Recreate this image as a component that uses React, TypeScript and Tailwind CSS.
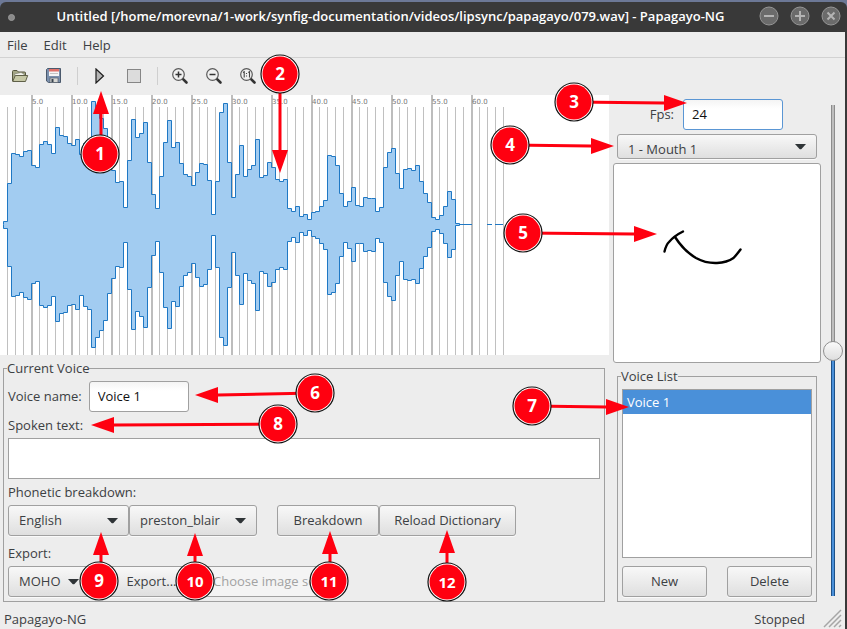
import React from 'react';

const TOPS = [
  126, 88, 58, 59, 61, 56, 55, 70, 72, 49, 46, 49, 58, 32, 40, 41, 48, 50, 44, 59, 48, 45, 6, 17, 23, 33, 61, 75, 87,
  86, 112, 65, 24, 42, 38, 27, 67, 99, 113, 81, 47, 25, 52, 47, 68, 79, 81, 90, 77, 68, 69, 85, 119, 86, 17, 8, 67,
  102, 79, 50, 81, 74, 70, 44, 82, 80, 67, 72, 84, 86, 84, 113, 116, 111, 121, 119, 124, 117, 116, 111, 105, 60, 61,
  70, 98, 111, 106, 92, 110, 111, 102, 103, 103, 116, 112, 72, 57, 53, 78, 93, 74, 73, 75, 70, 86, 98, 107, 122, 124,
  120, 111, 96, 104, 128,
];

const BOTTOMS = [
  133, 171, 201, 200, 197, 202, 204, 188, 186, 210, 212, 210, 201, 226, 218, 217, 210, 209, 214, 200, 211, 214, 252,
  242, 235, 225, 198, 183, 171, 172, 147, 194, 234, 216, 221, 232, 192, 160, 146, 177, 212, 233, 206, 211, 191, 180,
  177, 168, 182, 191, 189, 174, 140, 172, 242, 250, 192, 157, 180, 209, 178, 185, 188, 215, 176, 178, 191, 187, 174,
  172, 174, 146, 142, 147, 137, 140, 135, 141, 143, 148, 154, 199, 197, 188, 161, 147, 153, 166, 148, 148, 156, 155,
  156, 143, 147, 187, 201, 205, 180, 166, 184, 185, 184, 188, 173, 161, 152, 136, 134, 138, 148, 162, 154, 130,
];

function wavePath() {
  let d = 'M3.5 129.5';
  TOPS.forEach((t, i) => {
    d += `V${t + 0.5}H${3.5 + 4 * (i + 1)}`;
  });
  for (let i = BOTTOMS.length - 1; i >= 0; i--) {
    d += `V${BOTTOMS[i] + 0.5}H${3.5 + 4 * i}`;
  }
  return d + 'Z';
}

function Waveform() {
  const lines = Array.from({ length: 63 }, (_, k) => k);
  return (
    <div className="h-[260px] overflow-hidden bg-white">
      <svg width="609" height="260" role="img" aria-label="Audio waveform">
        {lines.map((k) => {
          const major = k % 5 === 3;
          return (
            <rect
              key={k}
              x={7 + 8 * k}
              y={major ? 0 : 12}
              width={major ? 2 : 1}
              height={major ? 260 : 248}
              fill={major ? '#bdbdbd' : '#c0c0c0'}
            />
          );
        })}
        {Array.from({ length: 12 }, (_, i) => (
          <text key={i} x={32 + 40 * i} y={9} fill="#777" className="font-['DejaVu_Sans',sans-serif] text-[7px]">
            {(5 * (i + 1)).toFixed(1)}
          </text>
        ))}
        <path d={wavePath()} fill="#a2ccf1" stroke="#1f78c4" strokeWidth="1" />
        <path d="M459 129.5h13M487 129.5h5M495 129.5h8" stroke="#1f78c4" strokeWidth="1" />
      </svg>
    </div>
  );
}

const face =
  'rounded-[3px] border border-[#a0a0a0] bg-linear-to-b from-[#f8f8f8] to-[#dfdfdf] shadow-[0_1px_0_#fafafa] text-[#3c4043]';

function Button({ children, className }: { children: React.ReactNode; className: string }) {
  return (
    <button type="button" className={`${face} h-[31px] shrink-0 pb-[2px] ${className}`}>
      {children}
    </button>
  );
}

function Select({ value, label, className, pad }: { value: string; label: string; className: string; pad?: string }) {
  return (
    <div className={`relative shrink-0 ${className}`}>
      <select
        aria-label={label}
        defaultValue={value}
        className={`${face} block h-full w-full appearance-none pl-[10px] pr-6 ${pad ?? 'pb-[2px]'}`}
      >
        <option>{value}</option>
      </select>
      <svg className="pointer-events-none absolute top-1/2 right-[11px] -mt-[3px]" width="11" height="6">
        <path d="M0 0H11L6.500 5Q5.500 5.700 4.500 5Z" fill="#2f3437" />
      </svg>
    </div>
  );
}

function Magnifier({ kind }: { kind: 'in' | 'out' | 'one' }) {
  return (
    <svg width="18" height="18" viewBox="0 0 18 18">
      <path d="M11.800 11.800L15.500 15.500" stroke="#333" strokeWidth="2.600" strokeLinecap="round" />
      <circle cx="7.500" cy="7.500" r="5.800" fill="#f0f0f0" stroke="#5a5a5a" strokeWidth="1.200" />
      {kind !== 'one' && <path d="M4.500 7.500h6" stroke="#333" strokeWidth="1.500" />}
      {kind === 'in' && <path d="M7.500 4.500v6" stroke="#333" strokeWidth="1.500" />}
      {kind === 'one' && (
        <path d="M4 5.500l1.200-.8v5.800M9.300 5.500l1.200-.8v5.800M7.500 6v1M7.500 8.500v1" stroke="#444" strokeWidth="1.100" fill="none" />
      )}
    </svg>
  );
}

function FolderIcon() {
  return (
    <svg width="18" height="16" viewBox="0 0 18 16">
      <path d="M1.500 13V3.500Q1.500 2.500 2.500 2.500H6L7.500 4H13.500Q14.500 4 14.500 5V8" fill="#a3a585" stroke="#56573f" />
      <path d="M3.500 6L10 4.500L13 6V8H4Z" fill="#f4f4ee" stroke="#77786a" strokeWidth=".6" />
      <path d="M4.300 7.500H16.700L14.500 13.500H1.700Z" fill="#c6c8a6" stroke="#5f6048" strokeLinejoin="round" />
    </svg>
  );
}

function FloppyIcon() {
  return (
    <svg width="16" height="16" viewBox="0 0 16 16">
      <path d="M1.500 .5H14.500V14.500H2.500L.5 13V1.500Z" fill="#7b90ad" stroke="#4b596c" />
      <rect x="3" y="1" width="10" height="7" fill="#f5f5f5" />
      <rect x="3" y="1" width="10" height="2.500" fill="#e0716a" />
      <path d="M4 5.500h8" stroke="#c5c5c5" />
      <rect x="4" y="10" width="8" height="4.500" fill="#d8d8d4" stroke="#56606c" strokeWidth=".7" />
      <rect x="5.500" y="11" width="2" height="3" fill="#39434f" />
    </svg>
  );
}

function ToolButton({ label, children }: { label: string; children: React.ReactNode }) {
  return (
    <button type="button" aria-label={label} className="flex h-8 w-[34px] items-center justify-center">
      {children}
    </button>
  );
}

function Separator() {
  return (
    <div className="flex w-3 justify-center">
      <div className="h-[18px] w-px bg-[#cfcfcf]" />
    </div>
  );
}

function WindowButton({ label, d }: { label: string; d: string }) {
  return (
    <button type="button" aria-label={label} className="block">
      <svg width="20" height="20" viewBox="0 0 20 20">
        <circle cx="10" cy="10" r="9" fill="#6b6b6b" stroke="#969696" />
        <path d={d} stroke="#b4b4b4" strokeWidth="2" fill="none" />
      </svg>
    </button>
  );
}

type Mark = { n: number; x: number; y: number; tip: [number, number] };

const MARKS: Mark[] = [
  { n: 1, x: 100, y: 154, tip: [101, 91] },
  { n: 2, x: 280, y: 74, tip: [280, 173] },
  { n: 3, x: 574, y: 102, tip: [687, 103] },
  { n: 4, x: 510, y: 145, tip: [614, 146] },
  { n: 5, x: 523, y: 233, tip: [657, 234] },
  { n: 6, x: 315, y: 393, tip: [195, 395] },
  { n: 7, x: 532, y: 406, tip: [629, 407] },
  { n: 8, x: 278, y: 424, tip: [91, 425] },
  { n: 9, x: 99, y: 581, tip: [101, 532] },
  { n: 10, x: 195, y: 581, tip: [195, 533] },
  { n: 11, x: 329, y: 581, tip: [330, 531] },
  { n: 12, x: 447, y: 582, tip: [447, 530] },
];

function Annotations() {
  return (
    <svg className="pointer-events-none absolute top-0 left-0" width="847" height="629">
      {MARKS.map(({ n, x, y, tip }) => {
        const horizontal = Math.abs(tip[0] - x) > Math.abs(tip[1] - y);
        const sign = horizontal ? Math.sign(tip[0] - x) : Math.sign(tip[1] - y);
        const base = horizontal ? [tip[0] - 23 * sign, tip[1]] : [tip[0], tip[1] - 23 * sign];
        const head = horizontal
          ? `M${tip[0]} ${tip[1]}L${base[0]} ${base[1] - 8}V${base[1] + 8}Z`
          : `M${tip[0]} ${tip[1]}L${base[0] - 8} ${base[1]}H${base[0] + 8}Z`;
        const startX = horizontal ? x : tip[0];
        return (
          <g key={n}>
            <line x1={startX} y1={y} x2={base[0]} y2={base[1]} stroke="#ff0010" strokeWidth="3" />
            <path d={head} fill="#ff0010" />
            <circle cx={x} cy={y} r="19" fill="#fff" stroke="#111" strokeWidth="1.200" />
            <circle cx={x} cy={y} r="17.500" fill="#ff0010" />
            <text
              x={x}
              y={y + 6}
              textAnchor="middle"
              fill="#fff"
              className={n > 9 ? 'text-[15px] font-bold' : 'text-[17px] font-bold'}
            >
              {n}
            </text>
          </g>
        );
      })}
    </svg>
  );
}

export default function App() {
  return (
    <div className="relative flex min-h-screen flex-col bg-[#6c7896] pt-[2px] font-['Open_Sans','Noto_Sans',sans-serif] text-[13px] leading-[18px] text-[#3c4043]">
      <header className="flex h-[30px] items-center rounded-t-md bg-[#393939] pr-[6px] pl-[7px]">
        <svg width="9" height="9" aria-hidden="true">
          <circle cx="4.500" cy="4.500" r="3" fill="#8a8a8a" stroke="#999" />
        </svg>
        <h1 className="flex-1 pb-[2px] pl-[6px] text-center text-[13px] font-semibold whitespace-nowrap text-white">
          Untitled [/home/morevna/1-work/synfig-documentation/videos/lipsync/papagayo/079.wav] - Papagayo-NG
        </h1>
        <div className="flex gap-[11px] pb-[2px]">
          <WindowButton label="Minimize" d="M5 10h10" />
          <WindowButton label="Maximize" d="M5 10h10M10 5v10" />
          <WindowButton label="Close" d="M6.500 6.500l7 7M13.500 6.500l-7 7" />
        </div>
      </header>

      <div className="flex flex-1 flex-col border-r-2 border-[#393939] bg-[#ededed]">
        <nav className="flex h-[26px] items-center gap-4 border-b border-[#d2d2d2] pl-[7px]">
          <button type="button">File</button>
          <button type="button">Edit</button>
          <button type="button">Help</button>
        </nav>

        <div className="flex h-[37px] items-center pb-[2px] pl-[3px]">
          <ToolButton label="Open"><FolderIcon /></ToolButton>
          <ToolButton label="Save"><FloppyIcon /></ToolButton>
          <Separator />
          <ToolButton label="Play">
            <svg width="10" height="16" viewBox="0 0 10 16">
              <path d="M1 1L8.500 8L1 15Z" fill="#b5b5b5" stroke="#1c1c1c" strokeWidth="1.200" />
            </svg>
          </ToolButton>
          <ToolButton label="Stop">
            <svg width="14" height="14" viewBox="0 0 14 14">
              <rect x=".5" y=".5" width="13" height="13" fill="#dcdcdc" stroke="#868686" />
            </svg>
          </ToolButton>
          <Separator />
          <ToolButton label="Zoom in"><Magnifier kind="in" /></ToolButton>
          <ToolButton label="Zoom out"><Magnifier kind="out" /></ToolButton>
          <ToolButton label="Zoom 1:1"><Magnifier kind="one" /></ToolButton>
        </div>

        <main className="flex">
          <div className="flex min-w-0 flex-1 flex-col">
            <Waveform />
            <fieldset className="mt-1 mr-1 ml-[3px] border border-[#a0a0a0] px-1 pb-1">
              <legend className="-ml-px">Current Voice</legend>
              <div className="mt-1 flex items-center gap-[7px]">
                <label htmlFor="voice-name" className="pb-[2px]">Voice name:</label>
                <input
                  id="voice-name"
                  defaultValue="Voice 1"
                  className="h-[31px] w-[100px] rounded-[3px] border border-[#a0a0a0] bg-linear-to-b from-[#f4f4f4] to-white to-30% px-2 pb-[2px] text-[#111]"
                />
              </div>
              <label htmlFor="spoken" className="mt-1 block">Spoken text:</label>
              <textarea
                id="spoken"
                className="mt-1 block h-[41px] w-full resize-none border border-[#a0a0a0] bg-white"
              />
              <div className="mt-1">Phonetic breakdown:</div>
              <div className="mt-1 flex">
                <Select label="Language" value="English" className="h-[31px] w-[121px]" />
                <Select label="Phoneme set" value="preston_blair" className="h-[31px] w-32" />
                <Button className="ml-5 w-[102px]">Breakdown</Button>
                <Button className="w-[137px]">Reload Dictionary</Button>
              </div>
              <div className="mt-2">Export:</div>
              <div className="mt-1 flex">
                <Select label="Export format" value="MOHO" className="h-[31px] w-[82px]" />
                <Button className="ml-2 w-[107px]">Export...</Button>
                <input
                  disabled
                  aria-label="Image set"
                  placeholder="Choose image set"
                  className="h-[31px] w-[125px] rounded-[3px] border border-[#a0a0a0] bg-[#f4f4f4] px-[7px] pb-[2px] placeholder:text-[#a2a2a2]"
                />
              </div>
            </fieldset>
          </div>

          <aside className="flex w-[212px] shrink-0 flex-col pl-1">
            <div className="mt-1 flex items-center justify-end gap-[9px] pr-[38px]">
              <label htmlFor="fps" className="pb-[2px]">Fps:</label>
              <input
                id="fps"
                defaultValue="24"
                className="h-[31px] w-[100px] rounded-[3px] border border-[#5a96d4] bg-linear-to-b from-[#f4f4f4] to-white to-30% px-2 pb-[2px] text-[#111]"
              />
            </div>
            <Select label="Mouth" value="1 - Mouth 1" className="mx-1 mt-1 h-[25px]" pad="pt-1" />
            <div className="mt-1 h-[200px] rounded-[3px] border border-[#a0a0a0] bg-white">
              <svg width="206" height="197" fill="none" stroke="#000" strokeWidth="2.400" strokeLinecap="round" role="img" aria-label="Mouth shape">
                <path d="M50.500 87.500Q52 81 55 78Q60 72 69 67.500" />
                <path d="M61 73Q70 87 82 94Q92 99.500 103 99Q113 98.500 119.500 94Q122 91.500 126.500 85.500" />
              </svg>
            </div>
            <fieldset className="mx-1 mt-1 border border-[#a0a0a0] px-1 pb-1">
              <legend className="-ml-px">Voice List</legend>
              <ul className="mt-1 h-[169px] border border-[#a0a0a0] bg-white">
                <li className="bg-[#4a90d9] px-1 py-[3px] text-white">Voice 1</li>
              </ul>
              <div className="mt-2 flex justify-between">
                <Button className="w-[85px]">New</Button>
                <Button className="w-[85px]">Delete</Button>
              </div>
            </fieldset>
          </aside>
          <div className="flex w-6 justify-center pt-[10px] pb-[6px]">
            <input
              type="range"
              aria-label="Volume"
              defaultValue={50}
              className="min-h-0 w-5 appearance-none self-stretch bg-[linear-gradient(to_right,#8c8c8c_1px,#bdbdbd_1px,#bdbdbd_3px,#8c8c8c_3px),linear-gradient(to_right,#1d5188_1px,#4a90d9_1px,#4a90d9_3px,#1d5188_3px)] bg-[length:4px_50%,4px_50%] bg-[position:center_top,center_bottom] bg-no-repeat [direction:rtl] [writing-mode:vertical-lr] [&::-webkit-slider-thumb]:size-5 [&::-webkit-slider-thumb]:appearance-none [&::-webkit-slider-thumb]:rounded-full [&::-webkit-slider-thumb]:border [&::-webkit-slider-thumb]:border-[#8f8f8f] [&::-webkit-slider-thumb]:bg-[linear-gradient(#fafafa,#dedede)]"
            />
          </div>
        </main>

        <footer className="flex flex-1 items-end pb-px pl-1">
          <span className="flex-1">Papagayo-NG</span>
          <span className="mr-[18px]">Stopped</span>
          <svg width="19" height="19" className="mr-[3px]" aria-hidden="true">
            <path d="M1 18L18 1M6 18L18 6M11 18L18 11M16 18L18 16" stroke="#a6a6a6" strokeWidth="1.500" />
          </svg>
        </footer>
      </div>
      <Annotations />
    </div>
  );
}
